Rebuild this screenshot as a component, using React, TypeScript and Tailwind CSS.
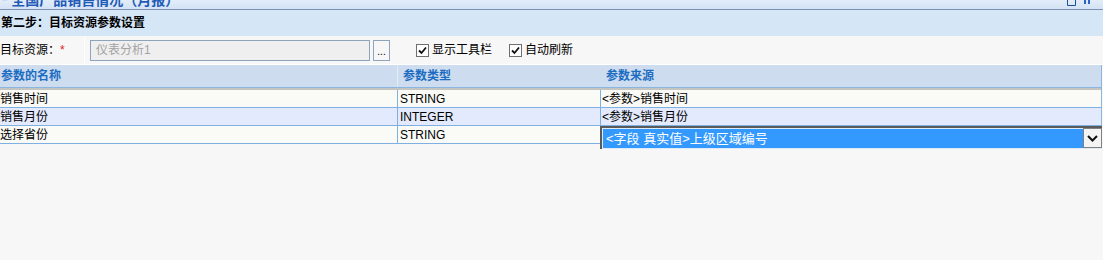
import React from 'react';

const cjk = { fontFamily: '"Liberation Sans", "Noto Sans CJK SC", sans-serif' };

interface Row {
  name: string;
  type: string;
  source: string;
}

const rows: Row[] = [
  { name: '销售时间', type: 'STRING', source: '<参数>销售时间' },
  { name: '销售月份', type: 'INTEGER', source: '<参数>销售月份' },
  { name: '选择省份', type: 'STRING', source: '<字段 真实值>上级区域编号' },
];

const Check: React.FC = () => (
  <span className="w-[13px] h-[13px] border border-[#707070] bg-white flex items-center justify-center">
    <svg width="9" height="9" viewBox="0 0 9 9">
      <path d="M1 4.5 L3.5 7 L8 1.5" stroke="#101010" strokeWidth="1.8" fill="none" />
    </svg>
  </span>
);

const App: React.FC = () => {
  return (
    <div className="w-[1103px] h-[260px] bg-[#f7f7f7] overflow-hidden text-[12px] text-black" style={cjk}>
      {/* Window title (clipped at top) */}
      <div className="h-[10px] bg-gradient-to-b from-[#e3edf9] to-[#d3e2f4] border-b border-[#7b93b0] overflow-hidden flex items-start">
        <span className="text-[#1f5cb8] font-bold text-[14px] leading-[14px] mt-[-7px] ml-[2px] whitespace-nowrap">
          * 全国产品销售情况（月报）
        </span>
        <div className="ml-auto flex items-start gap-[8px] mr-[12px]">
          <svg width="9" height="6" viewBox="0 0 9 6">
            <path d="M0.5 0 V5.5 H8.5 V0" stroke="#1f4f9c" strokeWidth="1" fill="none" />
          </svg>
          <svg width="7" height="6" viewBox="0 0 7 6">
            <path d="M1 0 V4 M5 0 V4" stroke="#2b63c4" strokeWidth="2" fill="none" />
          </svg>
        </div>
      </div>

      {/* Step header */}
      <div className="h-[26px] bg-[#d5e6f7] flex items-center pl-[1px] font-bold text-[12px]">
        第二步：目标资源参数设置
      </div>

      {/* Target resource row */}
      <div className="h-[29px] bg-[#f7f7f7] flex items-center border-b border-white mr-[1px]">
        <span className="w-[84px] whitespace-nowrap">
          目标资源：<span className="text-[#e02020]">*</span>
        </span>
        <div className="w-[1px] h-full bg-white"></div>
        <div className="ml-[5px] w-[280px] h-[21px] border border-[#8fa3bb] bg-[#efefef] flex items-center pl-[5px] text-[#a3a3a3]">
          仪表分析1
        </div>
        <div className="ml-[3px] w-[17px] h-[21px] border border-[#8fa3bb] bg-[#f7f7f7] flex items-end justify-center pb-[3px] text-[10px] leading-[10px]">
          ...
        </div>
        <label className="ml-[26px] flex items-center gap-[3px]">
          <Check />
          显示工具栏
        </label>
        <label className="ml-[17px] flex items-center gap-[3px]">
          <Check />
          自动刷新
        </label>
      </div>

      {/* Parameter table */}
      <div className="w-[1102px] border-r border-[#8cb6e2]">
        <div className="h-[23px] bg-[#cddcef] flex font-bold text-[#1b6cc2] border-b border-[#8cb6e2]">
          <div className="w-[397px] flex items-center pl-[1px]">参数的名称</div>
          <div className="w-[203px] flex items-center pl-[5px] border-l border-[#e2ebf6]">参数类型</div>
          <div className="flex-1 flex items-center pl-[6px]">参数来源</div>
        </div>
        <div className="h-[2px] bg-[#c4c4c0]"></div>
        {rows.map((row, i) => (
          <div
            key={i}
            className={`h-[18px] flex border-b border-[#7fb0e2] ${i === 1 ? 'bg-[#e4eafd]' : 'bg-[#fafaf6]'}`}
          >
            <div className="w-[397px] flex items-center leading-none">{row.name}</div>
            <div className="w-[203px] flex items-center pl-[2px] border-l border-[#7fb0e2] leading-none">{row.type}</div>
            <div className="flex-1 relative border-l border-[#7fb0e2]">
              {i < 2 ? (
                <div className="h-full flex items-center pl-[1px] leading-none">{row.source}</div>
              ) : (
                <div className="absolute left-[-1px] top-0 w-[502px] h-[23px] border-t-2 border-l-2 border-[#5a5a5a] bg-[#ddeaf8] flex pb-[1px] z-10">
                  <div className="flex-1 bg-[#3399ff] text-white flex items-center pl-[3px] text-[13px] leading-none mt-[1px] ml-[1px]">
                    {row.source}
                  </div>
                  <div className="w-[19px] h-[20px] border border-[#808080] bg-[#f4f4f4] flex items-center justify-center">
                    <svg width="11" height="7" viewBox="0 0 11 7">
                      <path d="M1 1 L5.5 5.5 L10 1" stroke="#101010" strokeWidth="2" fill="none" />
                    </svg>
                  </div>
                </div>
              )}
            </div>
          </div>
        ))}
      </div>
    </div>
  );
};

export default App;
